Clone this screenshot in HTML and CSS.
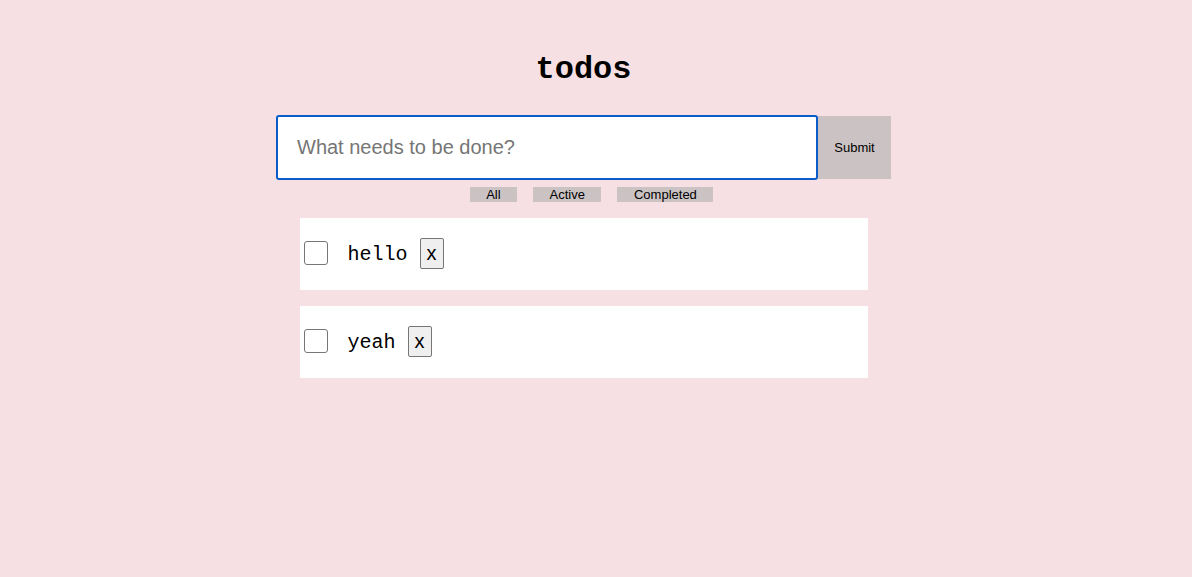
FILE: index.html
```html
<!DOCTYPE html>
<html>
<head>
<meta charset="utf-8">
<link rel="stylesheet" href="styles.css">
</head>
<body>
<div class="app">
  <h1 class="title">todos</h1>
  <form class="new-todo">
    <input class="new-input" type="text" placeholder="What needs to be done?">
    <button class="submit" type="button">Submit</button>
  </form>
  <div class="filters">
    <button class="filter" type="button">All</button>
    <button class="filter" type="button">Active</button>
    <button class="filter" type="button">Completed</button>
  </div>
  <ul class="list">
    <li class="item">
      <input class="check" type="checkbox">
      <span class="label">hello</span>
      <button class="del" type="button">x</button>
    </li>
    <li class="item">
      <input class="check" type="checkbox">
      <span class="label">yeah</span>
      <button class="del" type="button">x</button>
    </li>
  </ul>
</div>
</body>
</html>
```
FILE: styles.css
```css
html, body {
  margin: 0;
  padding: 0;
  background: #f7e0e4;
  height: 100%;
}
.app {
  width: 1167px;
  display: flex;
  flex-direction: column;
  align-items: center;
}
.title {
  font-family: "Liberation Mono", "Courier New", monospace;
  font-weight: bold;
  font-size: 32px;
  line-height: 36px;
  margin: 52px 0 0 0;
  color: #000;
}
.new-todo {
  display: flex;
  margin-top: 27px;
}
.new-input {
  box-sizing: border-box;
  width: 542px;
  height: 65px;
  border: 2px solid #0a5cc8;
  border-radius: 3px;
  padding: 0 0 0 19px;
  font-family: "Liberation Sans", Arial, sans-serif;
  font-size: 20px;
  background: #fff;
  outline: none;
}
.new-input::placeholder {
  color: #757575;
}
.submit {
  box-sizing: border-box;
  width: 73px;
  height: 63px;
  margin-top: 1px;
  border: none;
  background: #cbc2c3;
  font-family: "Liberation Sans", Arial, sans-serif;
  font-size: 13px;
  color: #000;
  padding: 0;
}
.filters {
  display: flex;
  gap: 16px;
  padding-left: 16px;
  margin-top: 7px;
}
.filter {
  border: none;
  background: #cbc2c3;
  font-family: "Liberation Sans", Arial, sans-serif;
  font-size: 13px;
  line-height: 15px;
  height: 15px;
  padding: 0 16.5px;
  color: #000;
}
.list {
  list-style: none;
  margin: 16px 0 0 0;
  padding: 0;
  display: flex;
  flex-direction: column;
  gap: 16px;
}
.item {
  width: 568px;
  height: 72px;
  background: #fff;
  display: flex;
  align-items: center;
  box-sizing: border-box;
  padding-left: 4px;
}
.check {
  appearance: none;
  -webkit-appearance: none;
  width: 24px;
  height: 24px;
  margin: 0 0 2px 0;
  border: 1px solid #767676;
  border-radius: 3px;
  background: #fff;
  box-sizing: border-box;
}
.label {
  font-family: "Liberation Mono", "Courier New", monospace;
  font-size: 20px;
  color: #000;
  margin-left: 20px;
  margin-right: 12px;
}
.del {
  box-sizing: border-box;
  height: 31px;
  margin-bottom: 2px;
  padding: 0 6px;
  border: 1px solid #767676;
  border-radius: 2px;
  background: #efefef;
  font-family: "Liberation Sans", Arial, sans-serif;
  font-size: 20px;
  color: #000;
}
```
